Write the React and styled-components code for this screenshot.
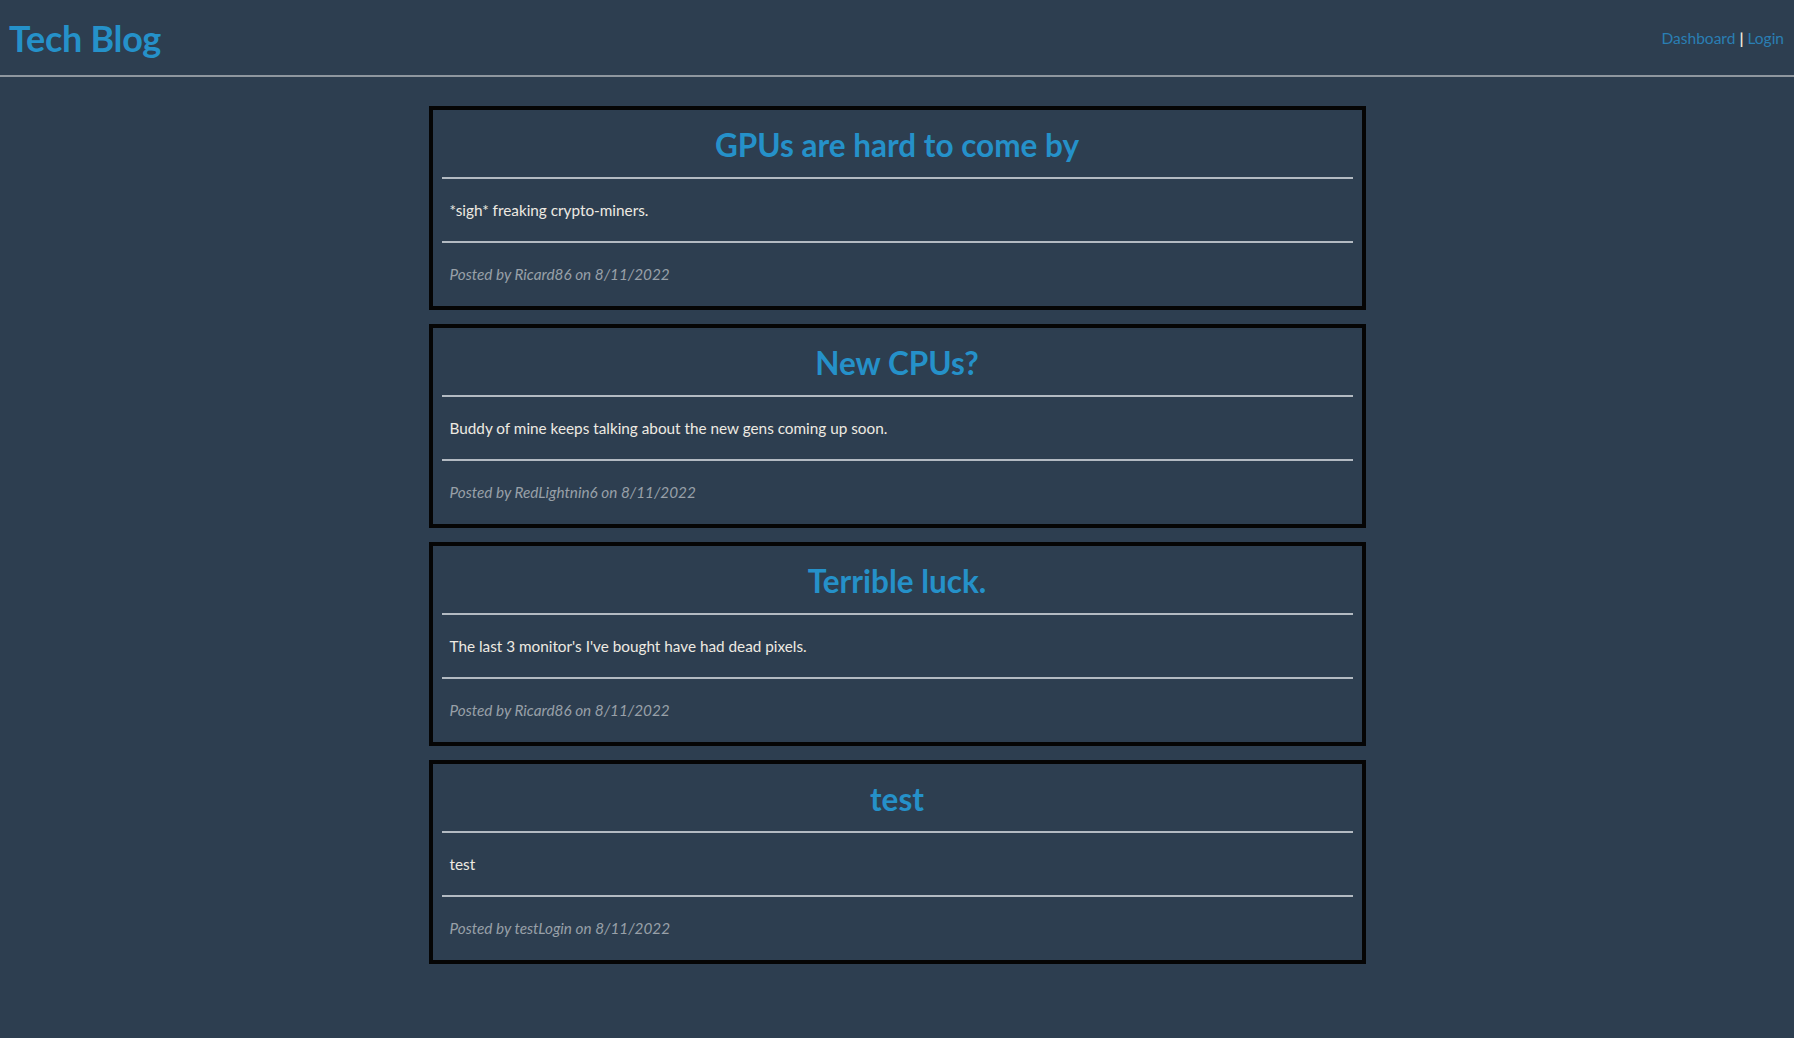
import styled, { createGlobalStyle } from "styled-components";

const GlobalStyle = createGlobalStyle`
  html, body {
    margin: 0;
    padding: 0;
    background: #2d3e50;
    font-family: Lato, "Liberation Sans", sans-serif;
  }
`;

const posts = [
  {
    title: "GPUs are hard to come by",
    body: "*sigh* freaking crypto-miners.",
    user: "Ricard86",
    date: "8/11/2022",
  },
  {
    title: "New CPUs?",
    body: "Buddy of mine keeps talking about the new gens coming up soon.",
    user: "RedLightnin6",
    date: "8/11/2022",
  },
  {
    title: "Terrible luck.",
    body: "The last 3 monitor's I've bought have had dead pixels.",
    user: "Ricard86",
    date: "8/11/2022",
  },
  {
    title: "test",
    body: "test",
    user: "testLogin",
    date: "8/11/2022",
  },
];

export default function App() {
  return (
    <Page>
      <GlobalStyle />
      <Header>
        <Brand>Tech Blog</Brand>
        <Nav>
          <NavLink href="#">Dashboard</NavLink>
          <Sep>|</Sep>
          <NavLink href="#">Login</NavLink>
        </Nav>
      </Header>
      <Main>
        {posts.map((p) => (
          <Card key={p.title}>
            <Title>{p.title}</Title>
            <Rule />
            <Body>{p.body}</Body>
            <Rule />
            <Meta>
              Posted by {p.user} on {p.date}
            </Meta>
          </Card>
        ))}
      </Main>
    </Page>
  );
}

const Page = styled.div`
  min-height: 1038px;
  background: #2d3e50;
`;

const Header = styled.header`
  display: flex;
  justify-content: space-between;
  align-items: center;
  height: 75px;
  padding: 0 10px 0 9px;
  border-bottom: 2px solid #8f979f;
`;

const Brand = styled.h1`
  margin: 0;
  font-size: 36px;
  font-weight: 700;
  color: #2591c9;
  letter-spacing: -0.3px;
`;

const Nav = styled.nav`
  display: flex;
  align-items: center;
  gap: 4px;
  font-size: 15.5px;
`;

const NavLink = styled.a`
  color: #2a7fb4;
  text-decoration: none;
`;

const Sep = styled.span`
  color: #ece6d8;
  font-weight: 700;
`;

const Main = styled.main`
  display: flex;
  flex-direction: column;
  align-items: center;
  gap: 14px;
  padding-top: 29px;
`;

const Card = styled.article`
  width: 937px;
  box-sizing: border-box;
  border: 4px solid #050505;
  padding: 0 9px;
`;

const Title = styled.h2`
  margin: 0;
  padding: 17px 0 13px;
  line-height: 37px;
  font-size: 31.5px;
  font-weight: 700;
  text-align: center;
  color: #2591c9;
`;

const Rule = styled.div`
  height: 2px;
  background: #b3bac2;
`;

const Body = styled.p`
  margin: 0;
  padding: 20px 8px;
  line-height: 22px;
  font-size: 15.3px;
  color: #eeeae2;
`;

const Meta = styled.p`
  margin: 0;
  padding: 20px 8px 21px;
  line-height: 22px;
  font-size: 15.3px;
  font-style: italic;
  color: #98a0a8;
`;
